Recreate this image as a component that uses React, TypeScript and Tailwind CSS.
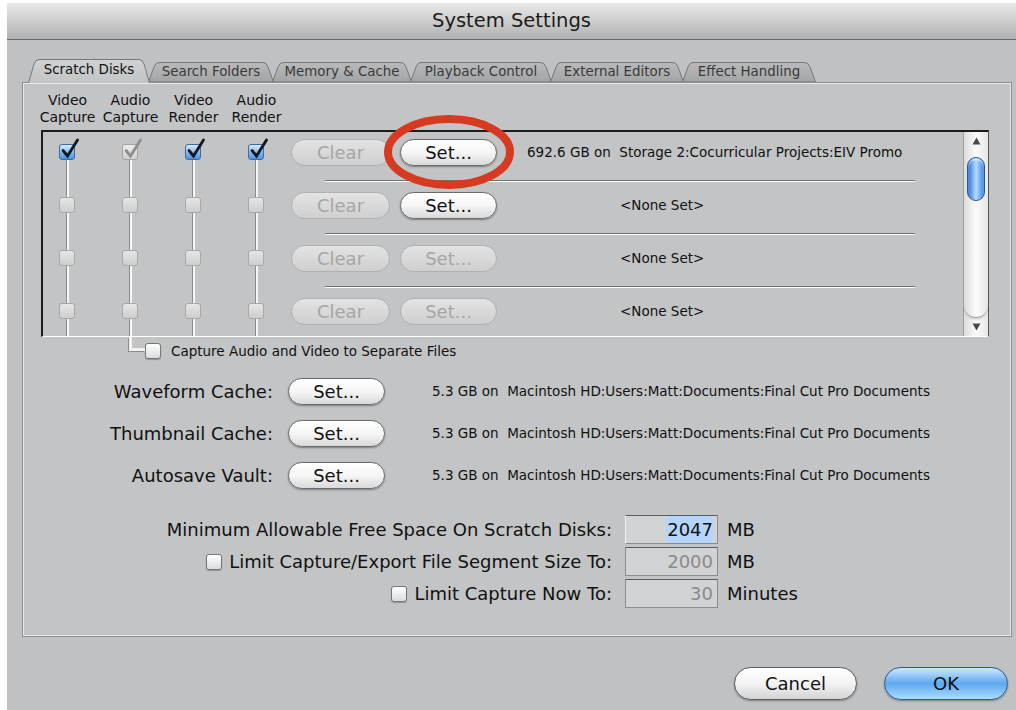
import type { ReactNode } from 'react';

type BoxKind = 'blue' | 'grayChecked' | 'dim' | 'plain';

// Small aqua-style checkbox; checked variants draw a tick that pokes out of the box
function Box({ kind }: { kind: BoxKind }) {
  const skin = {
    blue: 'border-[#3d6aa3] bg-linear-to-b from-[#d6ebff] via-[#86bdf1] to-[#4a93e2]',
    grayChecked: 'border-[#a2a2a2] bg-linear-to-b from-[#eeeeee] to-[#d0d0d0]',
    dim: 'border-[#a8a8a8] bg-linear-to-b from-[#e6e6e6] to-[#cecece]',
    plain: 'border-[#767676] bg-linear-to-b from-white to-[#dcdcdc] shadow-[0_1px_1px_rgba(0,0,0,0.25)]',
  }[kind];
  const tick = kind === 'blue' ? '#121821' : kind === 'grayChecked' ? '#8e8e8e' : null;
  return (
    <div className={`relative h-[16px] w-[16px] shrink-0 rounded-[3px] border ${skin}`}>
      {tick && (
        <svg className="absolute -top-[7px] left-[0px] h-[21px] w-[20px]" viewBox="0 0 20 21">
          <path d="M3 12.5 L7.5 18 L17.5 2" fill="none" stroke={tick} strokeWidth="2.8" strokeLinecap="round" />
        </svg>
      )}
    </div>
  );
}

function Pill({ children, width, on }: { children: ReactNode; width: string; on: boolean }) {
  const skin = on
    ? 'border-[#6b6b6b] bg-linear-to-b from-white via-[#f6f6f6] to-[#d9d9d9] text-[#111] shadow-[0_1px_2px_rgba(0,0,0,0.35)]'
    : 'border-[#b0b0b0] bg-linear-to-b from-[#e3e3e3] to-[#cfcfcf] text-[#a6a6a6]';
  return (
    <div className={`flex h-[27px] shrink-0 items-center justify-center rounded-full border text-[18px] leading-none ${width} ${skin}`}>
      {children}
    </div>
  );
}

function Tab({ label, width, active }: { label: string; width: number; active?: boolean }) {
  const h = active ? 24 : 20;
  const d = `M0.5 ${h} L6 5 Q7.5 0.5 11 0.5 L${width - 11} 0.5 Q${width - 7.5} 0.5 ${width - 6} 5 L${width - 0.5} ${h}`;
  const gid = `tab-${label.replace(/\W/g, '')}`;
  return (
    <div
      className={`relative flex shrink-0 items-center justify-center text-[13.4px] ${
        active ? 'z-10 -mb-[1px] h-[24px] pb-[2px] text-[#111]' : '-ml-[2px] h-[20px] pt-[1px] text-[#3a3a3a]'
      }`}
      style={{ width }}
    >
      <svg className="absolute inset-0 h-full w-full" viewBox={`0 0 ${width} ${h}`}>
        <defs>
          <linearGradient id={gid} x1="0" y1="0" x2="0" y2="1">
            <stop offset="0" stopColor={active ? '#cfd1d2' : '#b9babb'} />
            <stop offset="1" stopColor={active ? '#c2c4c5' : '#a3a4a5'} />
          </linearGradient>
        </defs>
        <path d={active ? d : `${d} Z`} fill={`url(#${gid})`} stroke="#777" strokeWidth="1" />
      </svg>
      <span className="relative">{label}</span>
    </div>
  );
}

const line = 'w-[3px] border-l border-[#8a8a8a] bg-[#f6f6f6]';

type DiskRowData = { boxes: BoxKind[]; setOn: boolean; text: string; none: boolean };

const rows: DiskRowData[] = [
  { boxes: ['blue', 'grayChecked', 'blue', 'blue'], setOn: true, text: '692.6 GB on  Storage 2:Cocurricular Projects:EIV Promo', none: false },
  { boxes: ['dim', 'dim', 'dim', 'dim'], setOn: true, text: '<None Set>', none: true },
  { boxes: ['dim', 'dim', 'dim', 'dim'], setOn: false, text: '<None Set>', none: true },
  { boxes: ['dim', 'dim', 'dim', 'dim'], setOn: false, text: '<None Set>', none: true },
];

function DiskRow({ row, first }: { row: DiskRowData; first: boolean }) {
  return (
    <div className="flex h-[53px] shrink-0">
      <div className="ml-[16px] flex gap-[47px]">
        {row.boxes.map((k, i) => (
          <div key={i} className="flex w-[16px] flex-col items-center">
            <div className={`h-[12px] ${first ? 'w-[3px]' : line}`} />
            <Box kind={k} />
            <div className={`h-[25px] ${line}`} />
          </div>
        ))}
      </div>
      <div className="ml-[27px] flex flex-col pt-[7px]">
        <div className="flex items-center">
          <Pill width="w-[99px]" on={false}>Clear</Pill>
          <div className="ml-[10px]">
            <Pill width="w-[97px]" on={row.setOn}>Set...</Pill>
          </div>
          <span className={`whitespace-pre text-[13.5px] text-[#111] ${row.none ? 'ml-[123px]' : 'ml-[30px]'}`}>{row.text}</span>
        </div>
        <div className="ml-[34px] mt-[14px] h-[2px] w-[590px] border-t border-[#707070] bg-white" />
      </div>
    </div>
  );
}

function ScrollBar() {
  return (
    <div className="flex w-[25px] shrink-0 flex-col border-l border-[#a0a0a0] bg-linear-to-r from-[#dcdcdc] via-[#fbfbfb] to-[#e6e6e6]">
      <div className="flex h-[18px] items-center justify-center">
        <svg width="9" height="8" viewBox="0 0 9 8"><path d="M4.5 0.5 L8.5 7.5 L0.5 7.5 Z" fill="#4a4a4a" /></svg>
      </div>
      <div className="mx-auto mt-[7px] h-[44px] w-[18px] rounded-full border border-[#22559c] bg-linear-to-r from-[#2f6fcf] via-[#b4dcff] to-[#3a82dc] shadow-[inset_0_2px_2px_rgba(255,255,255,0.6)]" />
      <div className="flex-1" />
      <div className="h-[14px] rounded-b-full border-b border-[#9a9a9a] shadow-[0_2px_2px_rgba(0,0,0,0.12)]" />
      <div className="flex h-[18px] items-center justify-center">
        <svg width="9" height="8" viewBox="0 0 9 8"><path d="M0.5 0.5 L8.5 0.5 L4.5 7.5 Z" fill="#4a4a4a" /></svg>
      </div>
    </div>
  );
}

const caches = ['Waveform Cache:', 'Thumbnail Cache:', 'Autosave Vault:'];
const cachePath = '5.3 GB on  Macintosh HD:Users:Matt:Documents:Final Cut Pro Documents';

function Field({ value, active }: { value: string; active?: boolean }) {
  return (
    <div
      className={`ml-[13px] flex h-[29px] w-[93px] items-center justify-end border border-[#8c8c8c] border-t-[#5c5c5c] bg-[#d2d3d4] pr-[4px] text-[18px] ${
        active ? 'border-l-[#f2f2f2] text-[#111]' : 'text-[#8a8a8a]'
      }`}
    >
      <span className={active ? 'bg-[#b5d5fb] pl-[1px]' : ''}>{value}</span>
    </div>
  );
}

export default function App() {
  return (
    <div className="flex h-[710px] w-[1016px] overflow-hidden bg-white pl-[7px] pt-[3px] font-['DejaVu_Sans',sans-serif]">
      <div className="flex w-[1009px] flex-col bg-[#bfc1c2]">
        <div className="flex h-[37px] shrink-0 items-center justify-center border-b border-[#6a6a6a] bg-linear-to-b from-[#e9e9e9] to-[#b2b2b2] text-[19.5px] text-[#1c1c1c]">
          System Settings
        </div>

        <div className="flex flex-1 flex-col pt-[19px]">
          <div className="relative z-10 ml-[21px] flex items-end">
            <Tab label="Scratch Disks" width={122} active />
            <Tab label="Search Folders" width={126} />
            <Tab label="Memory & Cache" width={140} />
            <Tab label="Playback Control" width={142} />
            <Tab label="External Editors" width={134} />
            <Tab label="Effect Handling" width={134} />
          </div>

          <div className="ml-[15px] flex h-[555px] w-[990px] flex-col border border-[#8d8d8d] bg-[#c2c4c5] shadow-[inset_1px_1px_0_#e9e9e9,inset_-1px_-1px_0_#e9e9e9]">
            <div className="ml-[13px] mt-[9px] flex text-[14px] leading-[17px] text-[#111]">
              {[['Video', 'Capture'], ['Audio', 'Capture'], ['Video', 'Render'], ['Audio', 'Render']].map(([a, b], i) => (
                <div key={i} className="w-[63px] text-center">
                  {a}
                  <br />
                  {b}
                </div>
              ))}
            </div>

            <div className="relative ml-[18px] mt-[4px] flex h-[207px] w-[948px] border-b border-l-2 border-r border-t-2 border-b-white border-l-[#1c1c1c] border-r-[#555] border-t-[#1c1c1c]">
              <div className="flex flex-1 flex-col overflow-hidden">
                {rows.map((r, i) => (
                  <DiskRow key={i} row={r} first={i === 0} />
                ))}
              </div>
              <ScrollBar />
              <svg className="absolute -top-[22px] left-[336px] h-[84px] w-[140px]" viewBox="0 0 140 84">
                <ellipse cx="70" cy="42" rx="61" ry="33" fill="none" stroke="#d63a20" strokeWidth="8" />
              </svg>
            </div>

            <div className="flex items-start">
              <div className="ml-[106px] h-[14px] w-[16px] border-b-[3px] border-l-[3px] border-b-[#f2f2f2] border-l-[#f2f2f2] shadow-[-1px_1px_0_#8a8a8a]" />
              <div className="mt-[5px] flex h-[18px] items-center">
                <Box kind="plain" />
                <span className="ml-[10px] text-[13.5px] text-[#111]">Capture Audio and Video to Separate Files</span>
              </div>
            </div>

            <div className="mt-[18px] flex flex-col gap-[15px]">
              {caches.map((c) => (
                <div key={c} className="flex h-[27px] items-center">
                  <div className="w-[250px] text-right text-[18px] text-[#111]">{c}</div>
                  <div className="ml-[15px]">
                    <Pill width="w-[97px]" on>
                      Set...
                    </Pill>
                  </div>
                  <span className="ml-[47px] whitespace-pre text-[13.5px] text-[#111]">{cachePath}</span>
                </div>
              ))}
            </div>

            <div className="mt-[26px] flex flex-col gap-[3px] text-[18px] text-[#111]">
              <div className="flex h-[29px] items-center">
                <div className="flex w-[589px] justify-end">Minimum Allowable Free Space On Scratch Disks:</div>
                <Field value="2047" active />
                <span className="ml-[9px]">MB</span>
              </div>
              <div className="flex h-[29px] items-center">
                <div className="flex w-[589px] items-center justify-end gap-[7px]">
                  <Box kind="plain" />
                  <span>Limit Capture/Export File Segment Size To:</span>
                </div>
                <Field value="2000" />
                <span className="ml-[9px]">MB</span>
              </div>
              <div className="flex h-[29px] items-center">
                <div className="flex w-[589px] items-center justify-end gap-[7px]">
                  <Box kind="plain" />
                  <span>Limit Capture Now To:</span>
                </div>
                <Field value="30" />
                <span className="ml-[9px]">Minutes</span>
              </div>
            </div>
          </div>

          <div className="mt-[30px] flex justify-end gap-[27px] pr-[8px]">
            <div className="flex h-[33px] w-[123px] items-center justify-center rounded-full border border-[#5c5c5c] bg-linear-to-b from-white via-[#f3f3f3] to-[#d4d4d4] text-[18px] text-[#111] shadow-[0_1px_2px_rgba(0,0,0,0.35)]">
              Cancel
            </div>
            <div className="flex h-[33px] w-[124px] items-center justify-center rounded-full border border-[#2d5994] bg-linear-to-b from-[#cde8ff] via-[#5ea8f0] to-[#a9dcff] text-[18px] text-[#111] shadow-[0_1px_2px_rgba(0,0,0,0.35)]">
              OK
            </div>
          </div>
        </div>
      </div>
    </div>
  );
}
